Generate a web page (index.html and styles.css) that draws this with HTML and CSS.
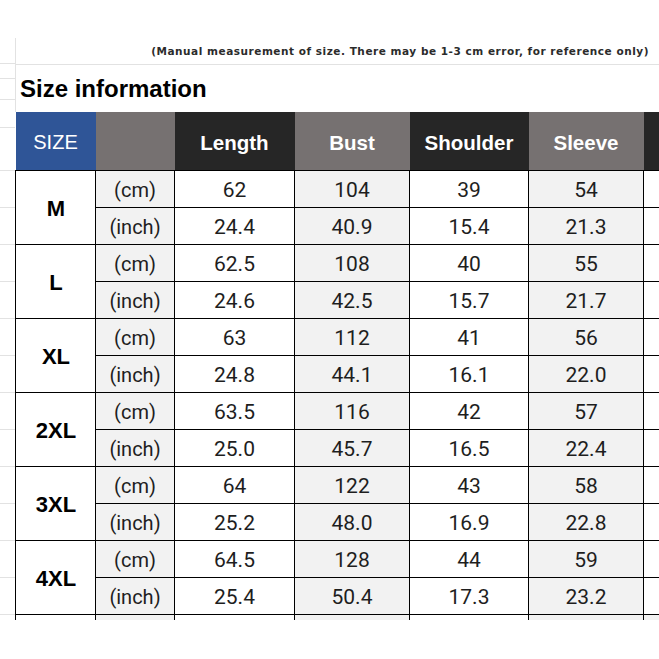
FILE: index.html
```html
<!DOCTYPE html>
<html lang="en">
<head>
<meta charset="utf-8">
<title>Size information</title>
<link rel="stylesheet" href="styles.css">
</head>
<body>
<div class="sheet">
  <div class="gutter">
    <div class="g g64"></div>
    <div class="g g15"></div>
    <div class="g g21"></div>
    <div class="g g28"></div>
    <div class="g g43"></div>
    <div class="g"></div><div class="g"></div><div class="g"></div><div class="g"></div>
    <div class="g"></div><div class="g"></div><div class="g"></div><div class="g"></div>
    <div class="g"></div><div class="g"></div><div class="g"></div><div class="g"></div>
  </div>
  <div class="main">
    <div class="note-spacer"></div>
    <div class="note-box"><p class="note">(Manual measurement of size. There may be 1-3 cm error, for reference only)</p></div>
    <div class="title-box"><h1 class="title">Size information</h1></div>
    <table class="size-table">
      <colgroup>
        <col class="c-size"><col class="c-unit"><col class="c-len"><col class="c-bust"><col class="c-sh"><col class="c-sl"><col class="c-extra">
      </colgroup>
      <thead>
        <tr class="head">
          <th class="h-size">SIZE</th>
          <th class="h-gray"></th>
          <th class="h-dark">Length</th>
          <th class="h-gray">Bust</th>
          <th class="h-dark">Shoulder</th>
          <th class="h-gray">Sleeve</th>
          <th class="h-dark"></th>
        </tr>
      </thead>
      <tbody>
        <tr><td class="sz" rowspan="2">M</td><td class="unit">(cm)</td><td>62</td><td class="alt">104</td><td>39</td><td class="alt">54</td><td></td></tr>
        <tr><td class="unit">(inch)</td><td>24.4</td><td class="alt">40.9</td><td>15.4</td><td class="alt">21.3</td><td></td></tr>
        <tr><td class="sz" rowspan="2">L</td><td class="unit">(cm)</td><td>62.5</td><td class="alt">108</td><td>40</td><td class="alt">55</td><td></td></tr>
        <tr><td class="unit">(inch)</td><td>24.6</td><td class="alt">42.5</td><td>15.7</td><td class="alt">21.7</td><td></td></tr>
        <tr><td class="sz" rowspan="2">XL</td><td class="unit">(cm)</td><td>63</td><td class="alt">112</td><td>41</td><td class="alt">56</td><td></td></tr>
        <tr><td class="unit">(inch)</td><td>24.8</td><td class="alt">44.1</td><td>16.1</td><td class="alt">22.0</td><td></td></tr>
        <tr><td class="sz" rowspan="2">2XL</td><td class="unit">(cm)</td><td>63.5</td><td class="alt">116</td><td>42</td><td class="alt">57</td><td></td></tr>
        <tr><td class="unit">(inch)</td><td>25.0</td><td class="alt">45.7</td><td>16.5</td><td class="alt">22.4</td><td></td></tr>
        <tr><td class="sz" rowspan="2">3XL</td><td class="unit">(cm)</td><td>64</td><td class="alt">122</td><td>43</td><td class="alt">58</td><td></td></tr>
        <tr><td class="unit">(inch)</td><td>25.2</td><td class="alt">48.0</td><td>16.9</td><td class="alt">22.8</td><td></td></tr>
        <tr><td class="sz" rowspan="2">4XL</td><td class="unit">(cm)</td><td>64.5</td><td class="alt">128</td><td>44</td><td class="alt">59</td><td></td></tr>
        <tr><td class="unit">(inch)</td><td>25.4</td><td class="alt">50.4</td><td>17.3</td><td class="alt">23.2</td><td></td></tr>
        <tr class="cut"><td></td><td class="unit"></td><td></td><td class="alt"></td><td></td><td class="alt"></td><td class="alt"></td></tr>
      </tbody>
    </table>
  </div>
</div>
</body>
</html>
```

FILE: styles.css
```css
html, body {
  margin: 0;
  padding: 0;
  background: #fff;
  overflow: hidden;
}
.sheet {
  display: flex;
  width: 659px;
  height: 659px;
  overflow: hidden;
}
.gutter {
  width: 15px;
  flex: 0 0 15px;
  display: flex;
  flex-direction: column;
}
.g {
  box-sizing: border-box;
  height: 37px;
  flex: 0 0 auto;
  border-bottom: 1px solid #e2e2e2;
}
.g64 { height: 64px; }
.g15 { height: 15px; }
.g21 { height: 21px; }
.g28 { height: 28px; }
.g43 { height: 43px; }

.main {
  flex: 1 1 auto;
  min-width: 0;
  overflow: hidden;
  display: flex;
  flex-direction: column;
}
.note-spacer { height: 38px; flex: 0 0 38px; }
.note-box {
  box-sizing: border-box;
  height: 27px;
  flex: 0 0 27px;
  border-left: 1px solid #e2e2e2;
  border-bottom: 1px solid #e2e2e2;
  display: flex;
  justify-content: flex-end;
  align-items: center;
  padding-right: 10px;
}
.note {
  margin: 0;
  font-family: "DejaVu Sans", sans-serif;
  font-weight: bold;
  font-size: 10.5px;
  letter-spacing: 0.53px;
  color: #2b2b2b;
  white-space: nowrap;
  padding-bottom: 1px;
}
.title-box {
  box-sizing: border-box;
  height: 47px;
  flex: 0 0 47px;
  border-left: 1px solid #e2e2e2;
  padding: 12px 0 0 4px;
}
.title {
  margin: 0;
  font-family: "Liberation Sans", Arial, sans-serif;
  font-weight: bold;
  font-size: 24px;
  line-height: 24px;
  color: #000;
}

.size-table {
  border-collapse: collapse;
  table-layout: fixed;
  width: 743px;
  flex: 0 0 auto;
}
.c-size { width: 80px; }
.c-unit { width: 79px; }
.c-len { width: 120px; }
.c-bust { width: 115px; }
.c-sh { width: 119px; }
.c-sl { width: 115px; }
.c-extra { width: 115px; }

.head { height: 58px; }
.head th {
  border: 0;
  padding: 4px 0 0 0;
  color: #fff;
  font-family: "Liberation Sans", Arial, sans-serif;
  font-weight: bold;
  font-size: 20.5px;
  text-align: center;
  vertical-align: middle;
}
.h-size {
  background: #2f5597;
  font-weight: normal !important;
  font-size: 20px !important;
}
.h-gray { background: #767171; }
.h-dark { background: #262626; }

.size-table tbody tr { height: 37px; }
.size-table td {
  border: 1px solid #000;
  padding: 2px 0 0 0;
  text-align: center;
  vertical-align: middle;
  font-family: Roboto, "Liberation Sans", sans-serif;
  font-size: 21px;
  color: #1e1e1e;
  background: #fff;
}
.size-table td.alt { background: #f2f2f2; }
.size-table td.unit {
  background: #f2f2f2;
  font-size: 20px;
}
.size-table td.sz {
  font-family: "Liberation Sans", Arial, sans-serif;
  font-weight: bold;
  font-size: 22px;
  color: #000;
  padding: 3px 0 0 1px;
}
.size-table tr.cut { height: 6px; }
.size-table tr.cut td {
  border-bottom: 0;
  padding: 0;
  font-size: 0;
}
```
